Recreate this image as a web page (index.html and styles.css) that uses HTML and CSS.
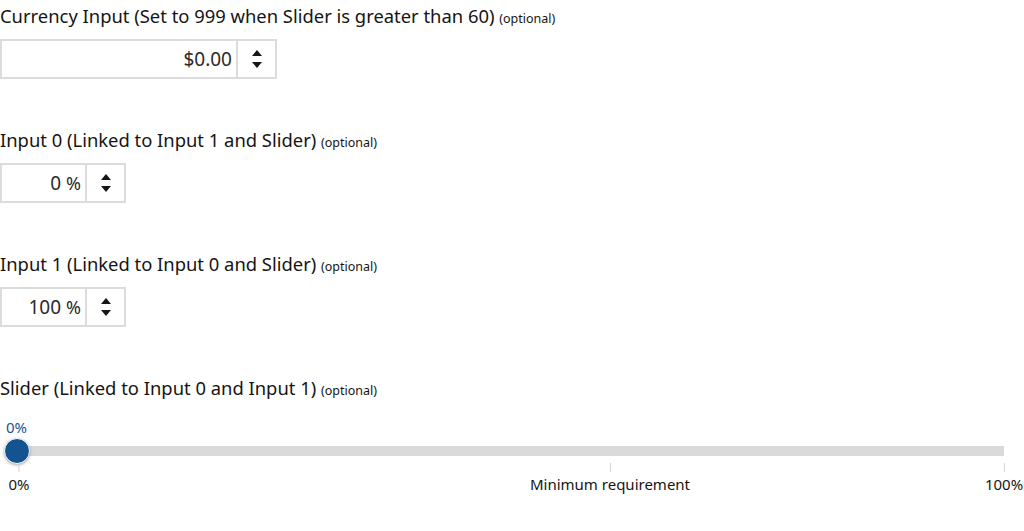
FILE: index.html
```html
<!DOCTYPE html>
<html>
<head>
<meta charset="utf-8">
<link rel="stylesheet" href="styles.css">
</head>
<body>
<div class="form">
  <div class="field">
    <div class="label">Currency Input (Set to 999 when Slider is greater than 60) <span class="opt">(optional)</span></div>
    <div class="number wide">
      <div class="value">$0.00</div>
      <div class="spin"><span class="up"></span><span class="down"></span></div>
    </div>
  </div>
  <div class="field">
    <div class="label">Input 0 (Linked to Input 1 and Slider) <span class="opt">(optional)</span></div>
    <div class="number narrow">
      <div class="value">0 <span class="unit">%</span></div>
      <div class="spin"><span class="up"></span><span class="down"></span></div>
    </div>
  </div>
  <div class="field">
    <div class="label">Input 1 (Linked to Input 0 and Slider) <span class="opt">(optional)</span></div>
    <div class="number narrow">
      <div class="value">100 <span class="unit">%</span></div>
      <div class="spin"><span class="up"></span><span class="down"></span></div>
    </div>
  </div>
  <div class="field slider-field">
    <div class="label">Slider (Linked to Input 0 and Input 1) <span class="opt">(optional)</span></div>
    <div class="slider">
      <div class="current">0%</div>
      <div class="track"><div class="thumb"></div></div>
      <div class="scale">
        <div class="mark" style="left:0%"><span class="tick"></span><span class="mlabel">0%</span></div>
        <div class="mark" style="left:60%"><span class="tick"></span><span class="mlabel">Minimum requirement</span></div>
        <div class="mark" style="left:100%"><span class="tick"></span><span class="mlabel">100%</span></div>
      </div>
    </div>
  </div>
</div>
</body>
</html>
```
FILE: styles.css
```css
html, body {
  margin: 0;
  padding: 0;
  background: #fff;
}
body {
  font-family: "Noto Sans", "Open Sans", sans-serif;
  color: #161513;
}
.form {
  display: flex;
  flex-direction: column;
}
.field {
  display: flex;
  flex-direction: column;
  margin-bottom: 45px;
}
.label {
  font-size: 18.4px;
  line-height: 24px;
  padding-top: 4px;
  margin-bottom: 11px;
  white-space: nowrap;
}
.opt {
  font-size: 12.5px;
  line-height: 1;
}
.number {
  display: flex;
  height: 40px;
  box-sizing: border-box;
  border: 2px solid #dcdcdc;
}
.wide { width: 277px; }
.narrow { width: 126px; }
.value {
  flex: 1;
  display: flex;
  align-items: center;
  justify-content: flex-end;
  padding-right: 4px;
  font-size: 19px;
  color: #2b2a28;
}
.unit {
  font-size: 18px;
  margin-left: 5px;
}
.spin {
  width: 37px;
  border-left: 2px solid #dcdcdc;
  display: flex;
  flex-direction: column;
  align-items: center;
  justify-content: center;
  gap: 6px;
}
.up, .down {
  width: 0;
  height: 0;
  border-left: 5px solid transparent;
  border-right: 5px solid transparent;
}
.up { border-bottom: 6px solid #161513; }
.down { border-top: 6px solid #161513; }

.slider {
  position: relative;
  margin: 0 20px 0 19px;
}
.current {
  font-size: 15px;
  line-height: 18px;
  color: #1e5591;
  margin-left: -13px;
  margin-top: 7px;
}
.track {
  position: relative;
  height: 10px;
  background: #dadada;
  margin-top: 10px;
  margin-left: -2px;
}
.thumb {
  position: absolute;
  left: -13px;
  top: -8px;
  width: 24px;
  height: 24px;
  border-radius: 50%;
  background: #13538f;
  border: 1px solid #fff;
  box-shadow: 0 1px 3px rgba(0,0,0,0.35);
}
.scale {
  position: relative;
  height: 40px;
}
.mark {
  position: absolute;
  top: 0;
  display: flex;
  flex-direction: column;
  align-items: center;
  transform: translateX(-50%);
}
.tick {
  width: 1px;
  height: 9px;
  margin-top: 7px;
  background: #d4d4d4;
}
.mlabel {
  font-size: 15px;
  line-height: 20px;
  margin-top: 2px;
  white-space: nowrap;
}
```
